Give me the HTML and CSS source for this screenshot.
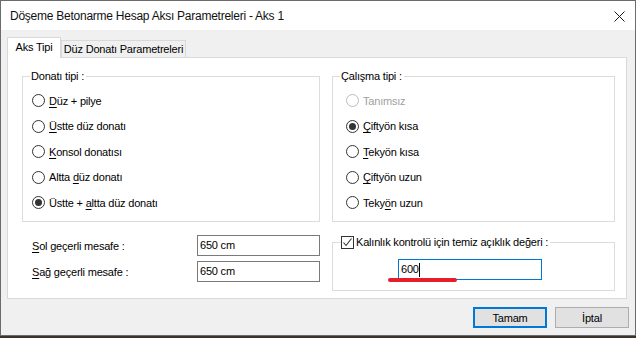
FILE: index.html
```html
<!DOCTYPE html>
<html lang="tr">
<head>
  <meta charset="UTF-8">
  <title>Döşeme Betonarme Hesap Aksı Parametreleri</title>
  <link rel="stylesheet" href="styles.css">
</head>
<body>

  <div class="window">
    <div class="titlebar">
      <span class="title">Döşeme Betonarme Hesap Aksı Parametreleri - Aks 1</span>
      <svg class="close" width="11" height="11" viewBox="0 0 11 11">
        <path d="M0.5 0.5 L10.5 10.5 M10.5 0.5 L0.5 10.5" stroke="#1a1a1a" stroke-width="1" fill="none"/>
      </svg>
    </div>

    <div class="dialog">
      <div class="tabs">
        <div class="tab active">Aks Tipi</div>
        <div class="tab">Düz Donatı Parametreleri</div>
      </div>

      <div class="panel">
        <div class="groups">
          <fieldset class="group group-left">
            <legend>Donatı tipi :</legend>
            <div class="radio-list">
              <div class="radio"><span class="dot"></span><span><u>D</u>üz + pilye</span></div>
              <div class="radio"><span class="dot"></span><span><u>Ü</u>stte düz donatı</span></div>
              <div class="radio"><span class="dot"></span><span><u>K</u>onsol donatısı</span></div>
              <div class="radio"><span class="dot"></span><span>Altta <u>d</u>üz donatı</span></div>
              <div class="radio checked"><span class="dot"></span><span>Üstte + <u>a</u>ltta düz donatı</span></div>
            </div>
          </fieldset>

          <fieldset class="group group-right">
            <legend>Çalışma tipi :</legend>
            <div class="radio-list">
              <div class="radio disabled"><span class="dot"></span><span>Tanımsız</span></div>
              <div class="radio checked"><span class="dot"></span><span><u>Ç</u>iftyön kısa</span></div>
              <div class="radio"><span class="dot"></span><span><u>T</u>ekyön kısa</span></div>
              <div class="radio"><span class="dot"></span><span><u>Ç</u>iftyön uzun</span></div>
              <div class="radio"><span class="dot"></span><span>Teky<u>ö</u>n uzun</span></div>
            </div>
          </fieldset>
        </div>

        <div class="lower">
          <div class="distances">
            <div class="field-row">
              <span class="field-label"><u>S</u>ol geçerli mesafe :</span>
              <div class="textbox">650 cm</div>
            </div>
            <div class="field-row">
              <span class="field-label"><u>S</u>ağ geçerli mesafe :</span>
              <div class="textbox">650 cm</div>
            </div>
          </div>

          <fieldset class="group group-check">
            <legend>
              <span class="checkbox">
                <svg width="11" height="11" viewBox="0 0 11 11">
                  <path d="M1.5 5.5 L4 8.5 L9.5 1.5" stroke="#333" stroke-width="1.1" fill="none"/>
                </svg>
              </span>
              <span>Kalınlık kontrolü için temiz açıklık değeri :</span>
            </legend>
            <div class="field-wrap">
              <div class="textbox focused">600<span class="caret"></span></div>
              <span class="mark"></span>
            </div>
          </fieldset>
        </div>
      </div>

      <div class="buttons">
        <div class="btn default">Tamam</div>
        <div class="btn">İptal</div>
      </div>
    </div>
  </div>

</body>
</html>
```

FILE: styles.css
```css
body {
  margin: 0;
  background: #3b342d;
  font-family: "Liberation Sans", Arial, sans-serif;
  font-size: 11px;
  letter-spacing: -0.2px;
  color: #000;
}

.window {
  width: 636px;
  height: 336px;
  box-sizing: border-box;
  border: 1px solid #6b6b6b;
  background: #f0f0f0;
  display: flex;
  flex-direction: column;
}

.titlebar {
  height: 29px;
  flex: none;
  background: #fff;
  display: flex;
  align-items: center;
  padding: 0 10px 0 9px;
  justify-content: space-between;
}

.title {
  font-family: "Liberation Sans", sans-serif;
  font-size: 12px;
  letter-spacing: -0.25px;
  color: #111;
  margin-top: 1px;
}

.close {
  margin-top: 1px;
}

.dialog {
  padding: 8px 6px 0 6px;
}

/* tabs */
.tabs {
  display: flex;
  align-items: flex-end;
  height: 20px;
  position: relative;
  z-index: 1;
  margin-bottom: -1px;
}

.tab {
  box-sizing: border-box;
  border: 1px solid #d9d9d9;
  border-bottom: none;
  background: #f0f0f0;
  height: 17px;
  margin-bottom: 1px;
  padding: 0;
  line-height: 17px;
  width: 125px;
  text-align: center;
  white-space: nowrap;
}

.tab.active {
  background: #fff;
  height: 21px;
  margin-bottom: 0;
  width: 54px;
  line-height: 18px;
}

.panel {
  width: 620px;
  height: 242px;
  box-sizing: border-box;
  border: 1px solid #d9d9d9;
  background: #fff;
  padding: 12px 11px 0 14px;
}

/* group boxes */
.groups,
.lower {
  display: grid;
  grid-template-columns: 298px 283px;
  column-gap: 12px;
}

.group {
  margin: 0;
  padding: 0;
  border: 1px solid #dcdcdc;
  min-width: 0;
}

.group legend {
  padding: 0 2px 0 1px;
  margin-left: 7px;
  line-height: 13px;
}

.group-left,
.group-right {
  height: 152px;
  box-sizing: border-box;
}

.radio-list {
  padding: 5px 0 0 9px;
}

.group-right .radio-list {
  padding-left: 13px;
}

.radio {
  height: 25.5px;
  display: flex;
  align-items: center;
  gap: 4px;
}

.radio .dot {
  width: 13px;
  height: 13px;
  box-sizing: border-box;
  border: 1px solid #333;
  border-radius: 50%;
  background: #fff;
  display: flex;
  align-items: center;
  justify-content: center;
}

.radio.checked .dot::after {
  content: "";
  width: 7px;
  height: 7px;
  border-radius: 50%;
  background: #333;
}

.radio.disabled .dot {
  border-color: #bcbcbc;
}

.radio.disabled {
  color: #a0a0a0;
}

u {
  text-underline-offset: 2px;
}

/* lower part */
.distances {
  padding: 13px 0 0 10px;
  display: flex;
  flex-direction: column;
  gap: 5px;
}

.field-row {
  display: flex;
  align-items: center;
  height: 21px;
}

.field-label {
  width: 167px;
}

.textbox {
  box-sizing: border-box;
  width: 123px;
  height: 21px;
  flex: none;
  border: 1px solid #7a7a7a;
  background: #fff;
  padding-left: 2px;
  line-height: 19px;
  display: flex;
  align-items: center;
}

.group-check {
  margin-top: 14px;
  height: 55px;
  box-sizing: border-box;
}

.group-check legend {
  display: flex;
  align-items: center;
  gap: 2px;
  margin-left: 8px;
  padding: 0 2px 0 0;
}

.checkbox {
  width: 13px;
  height: 13px;
  box-sizing: border-box;
  border: 1px solid #333;
  background: #fff;
  display: flex;
  align-items: center;
  justify-content: center;
}

.field-wrap {
  position: relative;
  margin: 10px 0 0 65px;
  width: 144px;
}

.textbox.focused {
  width: 144px;
  border-color: #0078d7;
}

.caret {
  width: 1px;
  height: 14px;
  background: #000;
}

.mark {
  position: absolute;
  left: -10px;
  top: 19px;
  width: 69px;
  height: 4px;
  border-radius: 2px;
  background: #e61e2a;
}

/* buttons */
.buttons {
  display: flex;
  justify-content: flex-end;
  gap: 8px;
  margin-top: 8px;
}

.btn {
  width: 74px;
  height: 21px;
  box-sizing: border-box;
  border: 1px solid #adadad;
  background: #e1e1e1;
  display: flex;
  align-items: center;
  justify-content: center;
}

.btn.default {
  border: 2px solid #0078d7;
}
```
